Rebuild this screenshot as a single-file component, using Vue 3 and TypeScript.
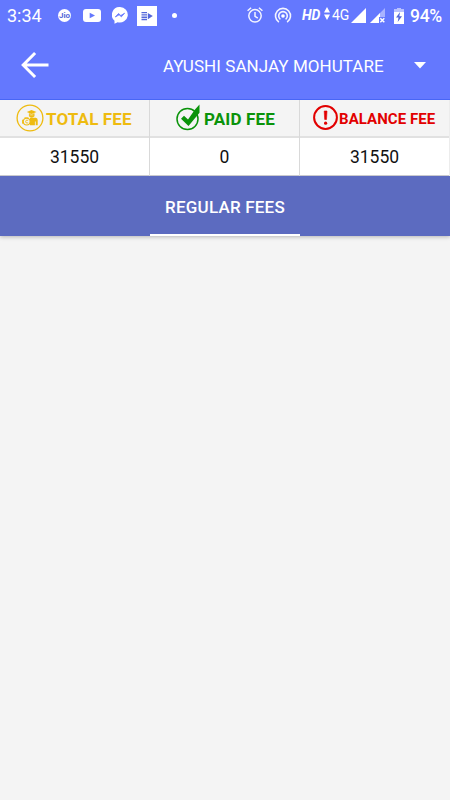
<script setup lang="ts">
interface Fee {
  kind: 'total' | 'paid' | 'balance'
  label: string
  amount: number
}

const student = 'AYUSHI SANJAY MOHUTARE'
const fees: Fee[] = [
  { kind: 'total', label: 'TOTAL FEE', amount: 31550 },
  { kind: 'paid', label: 'PAID FEE', amount: 0 },
  { kind: 'balance', label: 'BALANCE FEE', amount: 31550 },
]
</script>

<template>
  <div class="screen">
    <div class="status">
      <span class="time">3:34</span>
      <span class="jio">Jio</span>
      <svg class="youtube" width="18" height="13" viewBox="0 0 18 13">
        <rect width="18" height="13" rx="3" fill="#fff" />
        <path d="M6.7 3.8v5.4L12 6.5z" fill="#6478fe" />
      </svg>
      <svg class="messenger" width="16" height="17" viewBox="0 0 16 17">
        <path d="M8 0a8 7.8 0 1 1-2.4 15.3L2.5 16.8v-3A7.9 7.9 0 0 1 8 0z" fill="#fff" />
        <path d="M3.3 10l3.2-3.5 2.3 2 3.8-2.3-3.2 3.6-2.3-2z" fill="#6478fe" stroke="#6478fe" stroke-width=".8" />
      </svg>
      <svg class="recorder" width="20" height="20" viewBox="0 0 20 20">
        <rect width="20" height="20" fill="#fff" />
        <path d="M4.5 6.6h5.5M4.5 8.9h5.5M4.5 11.2h5.5M4.5 13.5h5.5" stroke="#5367da" stroke-width="1.4" />
        <path d="M10.8 7v6.2l5-3.1z" fill="#5367da" />
      </svg>
      <span class="dot"></span>
      <svg class="alarm" width="16" height="16" viewBox="0 0 16 16" fill="none" stroke="#f4f5ff" stroke-width="1.5">
        <circle cx="8" cy="8.8" r="6.2" />
        <path d="M8 5v4.3l2.8 1.8M.6 3.8l3.5-3M15.4 3.8l-3.5-3" />
      </svg>
      <svg class="hotspot" width="18" height="17" viewBox="0 0 18 17" fill="none" stroke="#f4f5ff" stroke-width="1.6">
        <path d="M4.9 15.2a7.5 7.5 0 1 1 8.2 0M6.4 12.3a4.3 4.3 0 1 1 5.2 0" />
        <circle cx="9" cy="9" r="1.8" fill="#fff" stroke="none" />
      </svg>
      <span class="hd">HD</span>
      <svg class="data" width="6" height="13" viewBox="0 0 6 13">
        <path d="M3 0l3 5.5H0zM3 13l3-5.5H0z" fill="#fff" />
      </svg>
      <span class="network">4G</span>
      <svg class="signal" width="15" height="15" viewBox="0 0 15 15"><path d="M15 0v15H0z" fill="#fff" /></svg>
      <svg class="signal-off" width="16" height="15" viewBox="0 0 16 15">
        <path d="M15 0v9H9v6H0z" fill="#a8b3ff" />
        <path d="M10 5v4H9v6H0z" fill="#fff" />
        <path d="M10.3 10.2l4 4M14.3 10.2l-4 4" stroke="#fff" stroke-width="1.5" />
      </svg>
      <svg class="battery" width="10" height="16" viewBox="0 0 10 16">
        <path d="M3 0h4v1.5h3V16H0V1.5h3z" fill="#fff" />
        <path d="M0 1.5h3V0h4v1.5h3V4H0z" fill="#b9c2ff" />
        <path d="M6.1 4L2 9.5h2.5L3.7 14 8 8.3H5.3z" fill="#5367da" />
      </svg>
      <span class="percent">94%</span>
    </div>

    <header class="appbar">
      <svg class="back" width="28" height="28" viewBox="0 0 28 28" fill="none" stroke="#fff" stroke-width="3">
        <path d="M14.1 2L2.2 14l11.9 12M3 14h24.5" />
      </svg>
      <span class="student">{{ student }}</span>
      <svg class="caret" width="12" height="7" viewBox="0 0 12 7"><path d="M0 0h12L6 6.5z" fill="#fff" /></svg>
    </header>

    <section class="fees">
      <div v-for="fee in fees" :key="fee.kind" class="fee" :class="fee.kind">
        <div class="heading">
          <svg v-if="fee.kind === 'total'" width="28" height="28" viewBox="0 0 28 28">
            <circle cx="14" cy="14" r="12.9" fill="none" stroke="#eebb10" stroke-width="1.3" />
            <path d="M10.8 7.9L15.5 5.9l5 2-5 2zM12.9 9.3l2.6 1 3-1V12.3q-2.800 2.700-5.600 0z" fill="#eebb10" />
            <path d="M13.6 10.900h3.800" stroke="#f4f4f4" stroke-width=".5" />
            <path d="M14 13.700h5.800q1.900.2 1.900 2.200v5.400h-2v-3.700h-.8v3.700h-4.900z" fill="#eebb10" />
            <circle cx="10.700" cy="17.600" r="3.400" fill="#f4f4f4" stroke="#eebb10" stroke-width="1.100" />
            <path d="M12.200 16.300q-2.500-.9-2.500 1.300t2.500 1.300M6.500 15.700v4M8.500 13.800h4" fill="none" stroke="#eebb10" stroke-width=".9" />
          </svg>
          <svg v-else-if="fee.kind === 'paid'" width="25" height="27" viewBox="0 0 25 27">
            <circle cx="11.5" cy="15" r="10.5" fill="none" stroke="#0a930a" stroke-width="1.5" />
            <path d="M23.5.5v8.2L12.5 22 5 14.8 8 11.7l4 3.8L18.8 5.8z" fill="#0a930a" />
          </svg>
          <svg v-else width="25" height="25" viewBox="0 0 25 25">
            <circle cx="12.5" cy="12.5" r="11.4" fill="none" stroke="#e20000" stroke-width="2" />
            <path d="M11.2 6h2.8l-.5 8.5h-1.8z" fill="#e20000" stroke="#e20000" stroke-width=".6" />
            <circle cx="12.6" cy="18.2" r="1.6" fill="#e20000" />
          </svg>
          <span class="label">{{ fee.label }}</span>
        </div>
        <div class="amount">{{ fee.amount }}</div>
      </div>
    </section>

    <nav class="tabs">
      <div class="tab">REGULAR FEES</div>
    </nav>
  </div>
</template>

<style>
body {
  margin: 0;
  background: #f4f4f4;
}
</style>

<style scoped>
.screen {
  width: 450px;
  height: 800px;
  overflow: hidden;
  background: #f4f4f4;
  font-family: Roboto, sans-serif;
}
svg {
  display: block;
  flex: none;
}
.status {
  display: flex;
  align-items: center;
  height: 31px;
  background: #6478fe;
  color: #fff;
  white-space: nowrap;
}
.time {
  width: 36px;
  margin-left: 7px;
  font-size: 18px;
}
.jio {
  display: flex;
  align-items: center;
  justify-content: center;
  width: 13px;
  height: 13px;
  margin-left: 15px;
  border-radius: 50%;
  background: #fff;
  color: #5367da;
  font-size: 8px;
  font-weight: 700;
}
.youtube { margin-left: 12px; }
.messenger { margin-left: 11px; }
.recorder { margin-left: 9px; }
.dot {
  width: 5px;
  height: 5px;
  margin-left: 15px;
  border-radius: 50%;
  background: #fff;
}
.alarm { margin: -1px 0 0 70px; }
.hotspot { margin-left: 11px; }
.hd {
  width: 20px;
  margin: -1px 0 0 10px;
  font-size: 14px;
  font-style: italic;
  font-weight: 700;
}
.data { margin: -4px 0 0 2px; }
.network {
  width: 18px;
  margin: -1px 0 0 2px;
  font-size: 14px;
}
.signal { margin-left: 1px; }
.signal-off { margin-left: 4px; }
.battery { margin-left: 8px; }
.percent {
  margin-left: 6px;
  font-size: 17.5px;
  font-weight: 500;
  letter-spacing: -.3px;
}
.appbar {
  display: flex;
  align-items: center;
  box-sizing: border-box;
  height: 69px;
  border-bottom: 1px solid #4866f5;
  background: #6478fe;
  color: #fff;
}
.back { margin-left: 21px; }
.student {
  width: 222px;
  margin: 1px 0 0 114px;
  font-size: 17px;
  letter-spacing: .06px;
  white-space: nowrap;
}
.caret { margin-left: 29px; }
.fees {
  display: grid;
  grid-template-columns: repeat(3, 1fr);
  height: 76px;
}
.fee {
  box-sizing: border-box;
  border-right: 1px solid #d9d9d9;
}
.fee:last-child { border-right-color: #ececec; }
.heading {
  display: flex;
  align-items: center;
  box-sizing: border-box;
  height: 38px;
  padding-bottom: 1px;
  border-bottom: 2px solid #e1e1e1;
  font-weight: 700;
  white-space: nowrap;
}
.label {
  margin-top: 2px;
  font-size: 17px;
  letter-spacing: .15px;
}
.total .heading { padding-left: 16px; color: #eebb10; }
.total .label { margin-left: 2px; }
.paid .heading { padding-left: 26px; color: #0a930a; }
.paid .label { margin-left: 3px; }
.balance .heading { padding-left: 13px; color: #e20000; }
.balance .label {
  margin: 3px 0 0 1px;
  font-size: 15px;
  letter-spacing: .06px;
}
.amount {
  display: flex;
  align-items: center;
  justify-content: center;
  box-sizing: border-box;
  height: 38px;
  border-bottom: 1px solid #c9c9ce;
  background: #fff;
  color: #111;
  font-size: 17.5px;
}
.tabs {
  display: flex;
  justify-content: center;
  height: 60px;
  background: #5c6bc0;
  box-shadow: 0 1px 4px rgba(0, 0, 0, .25);
}
.tab {
  display: flex;
  align-items: center;
  justify-content: center;
  box-sizing: border-box;
  width: 150px;
  padding-top: 3px;
  border-bottom: 2px solid #fff;
  color: #fff;
  font-size: 17px;
  font-weight: 500;
  letter-spacing: .2px;
  white-space: nowrap;
}
</style>
